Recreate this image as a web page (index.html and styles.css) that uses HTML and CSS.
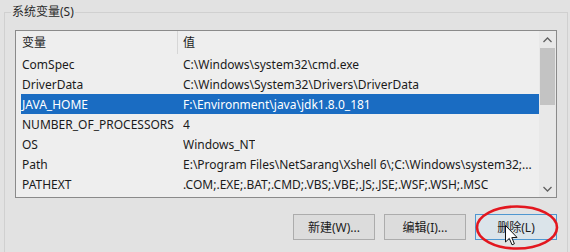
FILE: index.html
```html
<!DOCTYPE html>
<html lang="zh-CN">
<head>
  <meta charset="UTF-8" />
  <title>系统变量</title>
  <link rel="stylesheet" href="styles.css">
</head>
<body>
  <fieldset class="group">
    <legend class="group-title">系统变量(S)</legend>

    <div class="listbox">
      <div class="list-main">
        <div class="list-head">
          <div class="head-name">变量</div>
          <div class="head-value">值</div>
        </div>
        <div class="list-body">
          <div class="row"><span class="cell-name">ComSpec</span><span class="cell-value">C:\Windows\system32\cmd.exe</span></div>
          <div class="row"><span class="cell-name">DriverData</span><span class="cell-value">C:\Windows\System32\Drivers\DriverData</span></div>
          <div class="row selected"><span class="cell-name">JAVA_HOME</span><span class="cell-value">F:\Environment\java\jdk1.8.0_181</span></div>
          <div class="row"><span class="cell-name">NUMBER_OF_PROCESSORS</span><span class="cell-value">4</span></div>
          <div class="row"><span class="cell-name">OS</span><span class="cell-value">Windows_NT</span></div>
          <div class="row"><span class="cell-name">Path</span><span class="cell-value">E:\Program Files\NetSarang\Xshell 6\;C:\Windows\system32;...</span></div>
          <div class="row"><span class="cell-name">PATHEXT</span><span class="cell-value">.COM;.EXE;.BAT;.CMD;.VBS;.VBE;.JS;.JSE;.WSF;.WSH;.MSC</span></div>
        </div>
      </div>

      <div class="scrollbar">
        <div class="sb-arrow">
          <svg width="9" height="6" viewBox="0 0 9 6"><path d="M0.5 5 L4.5 1 L8.5 5" fill="none" stroke="#606060" stroke-width="1.3"/></svg>
        </div>
        <div class="sb-track"><div class="sb-thumb"></div></div>
        <div class="sb-arrow">
          <svg width="9" height="6" viewBox="0 0 9 6"><path d="M0.5 1 L4.5 5 L8.5 1" fill="none" stroke="#606060" stroke-width="1.3"/></svg>
        </div>
      </div>
    </div>

    <div class="buttons">
      <button class="btn">新建(W)...</button>
      <button class="btn">编辑(I)...</button>
      <button class="btn btn-focus">删除(L)</button>
    </div>
  </fieldset>

  <!-- annotation drawn over the dialog -->
  <svg class="overlay" width="570" height="252" viewBox="0 0 570 252">
    <ellipse cx="517" cy="227.5" rx="40" ry="21" fill="none" stroke="#e3171f" stroke-width="2.6"/>
    <path d="M505.5 225.5 L505.5 242 L509.3 238.4 L512 244.8 L514.4 243.8 L511.8 237.6 L517 237.4 Z" fill="#fff" stroke="#111" stroke-width="1" stroke-linejoin="round"/>
  </svg>
</body>
</html>
```

FILE: styles.css
```css
body {
  margin: 0;
  width: 570px;
  height: 252px;
  overflow: hidden;
  background: #e2e2e2;
  color: #1b1b1b;
  font-family: "Noto Sans", "Noto Sans CJK SC", sans-serif;
  font-size: 12px;
  position: relative;
}

.group {
  margin: 4px 2px 0 4px;
  padding: 10px 10px 20px 10px;
  border: 1px solid #d0d0d0;
  min-width: 0;
}

.group-title {
  margin-left: -4px;
  padding: 0 1px;
  line-height: 16px;
  color: #2a2a2a;
}

.listbox {
  display: flex;
  height: 166px;
  border: 1px solid #8a8a8a;
  background: #eeeeee;
}

.list-main {
  flex: 1;
  min-width: 0;
}

.list-head {
  display: flex;
  height: 23px;
  align-items: stretch;
}

.head-name {
  width: 155px;
  padding-left: 6px;
  line-height: 23px;
  border-right: 1px solid #d6d6d6;
}

.head-value {
  padding-left: 5px;
  line-height: 23px;
}

.list-body {
  padding-left: 5px;
}

.row {
  display: flex;
  height: 20px;
  line-height: 21px;
  white-space: nowrap;
}

.row.selected {
  background: #1a6cc2;
  color: #fff;
}

.cell-name {
  width: 161px;
  padding-left: 1px;
  flex-shrink: 0;
}

.cell-value {
  overflow: hidden;
}

.scrollbar {
  width: 17px;
  display: flex;
  flex-direction: column;
  background: #e8e8e8;
}

.sb-arrow {
  height: 17px;
  display: flex;
  align-items: center;
  justify-content: center;
}

.sb-track {
  flex: 1;
  padding: 0 1px;
}

.sb-thumb {
  height: 57px;
  background: #c3c3c3;
}

.buttons {
  display: flex;
  justify-content: flex-end;
  gap: 9px;
  margin-top: 16px;
}

.btn {
  width: 82px;
  height: 26px;
  padding: 0;
  border: 1px solid #acacac;
  background: #dcdcdc;
  color: #1b1b1b;
  font-family: "Noto Sans", "Noto Sans CJK SC", sans-serif;
  font-size: 12px;
}

.btn-focus {
  border-color: #4f97d0;
  background: #dbe4ea;
}

.overlay {
  position: absolute;
  top: 0;
  left: 0;
  pointer-events: none;
}
```
